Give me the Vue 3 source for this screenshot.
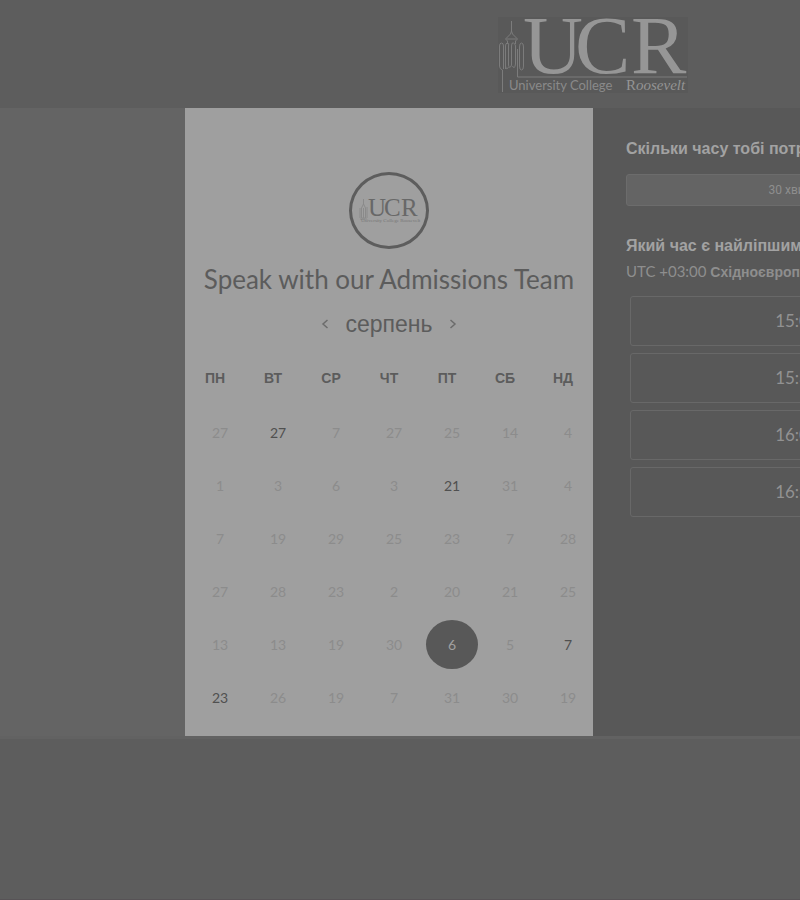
<script setup>
import { ref } from 'vue'

const weekdays = ['ПН', 'ВТ', 'СР', 'ЧТ', 'ПТ', 'СБ', 'НД']
const rows = [
  [27, 27, 7, 27, 25, 14, 4],
  [1, 3, 6, 3, 21, 31, 4],
  [7, 19, 29, 25, 23, 7, 28],
  [27, 28, 23, 2, 20, 21, 25],
  [13, 13, 19, 30, 6, 5, 7],
  [23, 26, 19, 7, 31, 30, 19],
]
const available = ['0-1', '1-4', '4-4', '4-6', '5-0']
const selected = ref('4-4')
const slots = ['15:00', '15:30', '16:00', '16:30']
</script>

<template>
  <div class="page">
    <div class="sheet">
      <header class="header">
        <svg class="logo" viewBox="0 0 190 78" role="img" aria-label="University College Roosevelt">
          <rect class="plate" width="190" height="76" />
          <g class="tower">
            <path d="M13.500 4v10M13.500 14l-1 3-5 5 2 2v3M13.500 14l1 3 5 5-2 2v3M8.500 22h10M4.500 75V53q-3-1-3-4V29q0-3 2-3t2 3v23M7.500 52V29q0-3 2-3t1 3v19q1 5 3 0V29q0-4 2-3t2 3v18q-1 6-3 2M7.500 49q1 5 3 1M21.500 30q0-4 2-4t2 4v19q0 4-2 4t-2-4zM19.500 32v28H189" />
          </g>
          <g class="letters">
            <text x="25" y="56">U</text>
            <text x="77" y="56">C</text>
            <text x="133" y="56">R</text>
          </g>
          <text class="tag" x="11" y="73">University College</text>
          <text class="name" x="128" y="73">R<tspan class="slant">oosevelt</tspan></text>
        </svg>
      </header>

      <main class="band">
        <div class="booking">
          <section class="calendar">
            <div class="avatar">
              <svg class="avatar-logo" viewBox="0 0 60 26" role="img" aria-label="UCR">
                <path class="avatar-tower" d="M4.500 1v6M2.500 10l2-4 2 4v10h-4zM1 20V10M8 20V9M1 21h7M4.500 10v10" />
                <text class="avatar-letters" x="9" y="18">U</text>
                <text class="avatar-letters" x="25" y="18">C</text>
                <text class="avatar-letters" x="42" y="18">R</text>
                <text class="avatar-tag" x="2" y="24">University College Roosevelt</text>
              </svg>
            </div>
            <h1 class="title">Speak with our Admissions Team</h1>
            <div class="month">
              <button class="arrow" type="button" aria-label="Попередній місяць">
                <svg viewBox="0 0 8 12"><path d="M6.500 2 2 6l4.500 4" /></svg>
              </button>
              <h2 class="month-name">серпень</h2>
              <button class="arrow" type="button" aria-label="Наступний місяць">
                <svg viewBox="0 0 8 12"><path d="M1.500 2 6 6l-4.500 4" /></svg>
              </button>
            </div>
            <table class="days">
              <thead>
                <tr><th v-for="d in weekdays" :key="d" scope="col">{{ d }}</th></tr>
              </thead>
              <tbody>
                <tr v-for="(row, r) in rows" :key="r">
                  <td v-for="(n, c) in row" :key="c">
                    <button
                      class="day"
                      :class="{ open: available.includes(`${r}-${c}`), chosen: selected === `${r}-${c}` }"
                      :disabled="!available.includes(`${r}-${c}`)"
                      type="button"
                      @click="selected = `${r}-${c}`"
                    >{{ n }}</button>
                  </td>
                </tr>
              </tbody>
            </table>
          </section>

          <section class="options">
            <h3 class="question">Скільки часу тобі потрібно?</h3>
            <button class="duration" type="button">30 хвилин</button>
            <h3 class="question">Який час є найліпшим?</h3>
            <p class="zone">UTC +03:00 <b>Східноєвропейський час</b></p>
            <ul class="slots">
              <li v-for="s in slots" :key="s"><button class="slot" type="button">{{ s }}</button></li>
            </ul>
          </section>
        </div>
      </main>
    </div>
  </div>
</template>

<style>
body {
  margin: 0;
  background: #5d5d5d;
}
</style>

<style scoped>
.page {
  box-sizing: border-box;
  min-height: 100vh;
  overflow: hidden;
  background: #5d5d5d;
  border-bottom: 1px solid #575356;
  font-family: Lato, "Liberation Sans", sans-serif;
}
.sheet {
  min-width: 1186px;
}
.header {
  display: flex;
  justify-content: center;
  padding: 17px 0 13px;
}
.logo {
  width: 190px;
  height: 78px;
  overflow: visible;
}
.plate {
  fill: #595959;
}
.tower path {
  fill: none;
  stroke: #7c7c7c;
  stroke-width: 1;
}
.letters {
  font: 83px "Liberation Serif", serif;
  fill: #969696;
}
.tag {
  font: 13px Lato, sans-serif;
  fill: #8a8a8a;
}
.name {
  font: 15px "Liberation Serif", serif;
  fill: #949494;
}
.slant {
  font-style: italic;
}
.band {
  display: flex;
  justify-content: center;
  background: #646464;
  border-bottom: 3px solid #626262;
}
.booking {
  display: grid;
  grid-template-columns: 408px 408px;
}
.calendar {
  display: flex;
  flex-direction: column;
  align-items: center;
  padding: 64px 0 12px;
  background: #9f9f9f;
  color: #5c5c5c;
}
.avatar {
  box-sizing: border-box;
  display: flex;
  align-items: center;
  justify-content: center;
  width: 80px;
  height: 77px;
  border: 3px solid #5d5d5d;
  border-radius: 50%;
}
.avatar-logo {
  flex: none;
  width: 60px;
  height: 26px;
  overflow: visible;
}
.avatar-tower {
  fill: none;
  stroke: #8a8a8a;
  stroke-width: 1;
}
.avatar-letters {
  font: 25px "Liberation Serif", serif;
  fill: #686868;
}
.avatar-tag {
  font: 5px "Liberation Serif", serif;
  fill: #767676;
}
.title {
  margin: 14px 0 0;
  font-size: 26px;
  line-height: 32px;
  font-weight: 400;
  white-space: nowrap;
}
.month {
  display: flex;
  align-items: center;
  gap: 16px;
  margin-top: 13px;
}
.month-name {
  margin: 0;
  font: 400 23px/32px "Liberation Sans", sans-serif;
}
.arrow {
  display: flex;
  padding: 0;
  border: 0;
  background: none;
}
.arrow svg {
  width: 8px;
  height: 12px;
  fill: none;
  stroke: #6c6c6c;
  stroke-width: 1.5;
}
.days {
  width: 406px;
  margin-top: 24px;
  border-collapse: collapse;
  table-layout: fixed;
}
.days th {
  height: 28px;
  padding: 0 0 14px;
  font: 700 14px/20px "Liberation Sans", sans-serif;
}
.days td {
  height: 53px;
  padding: 0 0 0 10px;
}
.day {
  display: block;
  width: 48px;
  height: 49px;
  padding: 0;
  border: 0;
  background: none;
  color: #8c8c8c;
  font: 14px/20px Lato, sans-serif;
}
.open {
  color: #505050;
}
.chosen {
  width: 52px;
  margin: 0 -2px;
  border-radius: 50%;
  background: #585858;
  color: #a0a0a0;
}
.options {
  padding: 31px 33px;
  background: #585858;
  color: #a2a2a2;
}
.question {
  margin: 0;
  font: 700 16px/20px "Liberation Sans", sans-serif;
  white-space: nowrap;
}
.duration {
  display: block;
  width: 100%;
  height: 32px;
  margin: 15px 0 30px;
  border: 1px solid #6c6c6c;
  border-radius: 3px;
  background: #646464;
  color: #8e8e8e;
  font: 12px/16px Roboto, sans-serif;
}
.zone {
  margin: 5px 0 0;
  color: #8e8e8e;
  font-size: 15px;
  line-height: 20px;
  white-space: nowrap;
}
.zone b {
  font: 700 14px/20px "Liberation Sans", sans-serif;
}
.slots {
  display: grid;
  gap: 7px;
  margin: 14px 0 0;
  padding: 0 4px;
  list-style: none;
}
.slot {
  display: block;
  width: 100%;
  height: 50px;
  border: 1px solid #686868;
  border-radius: 3px;
  background: none;
  color: #929292;
  font: 17px/20px Lato, sans-serif;
}
</style>
